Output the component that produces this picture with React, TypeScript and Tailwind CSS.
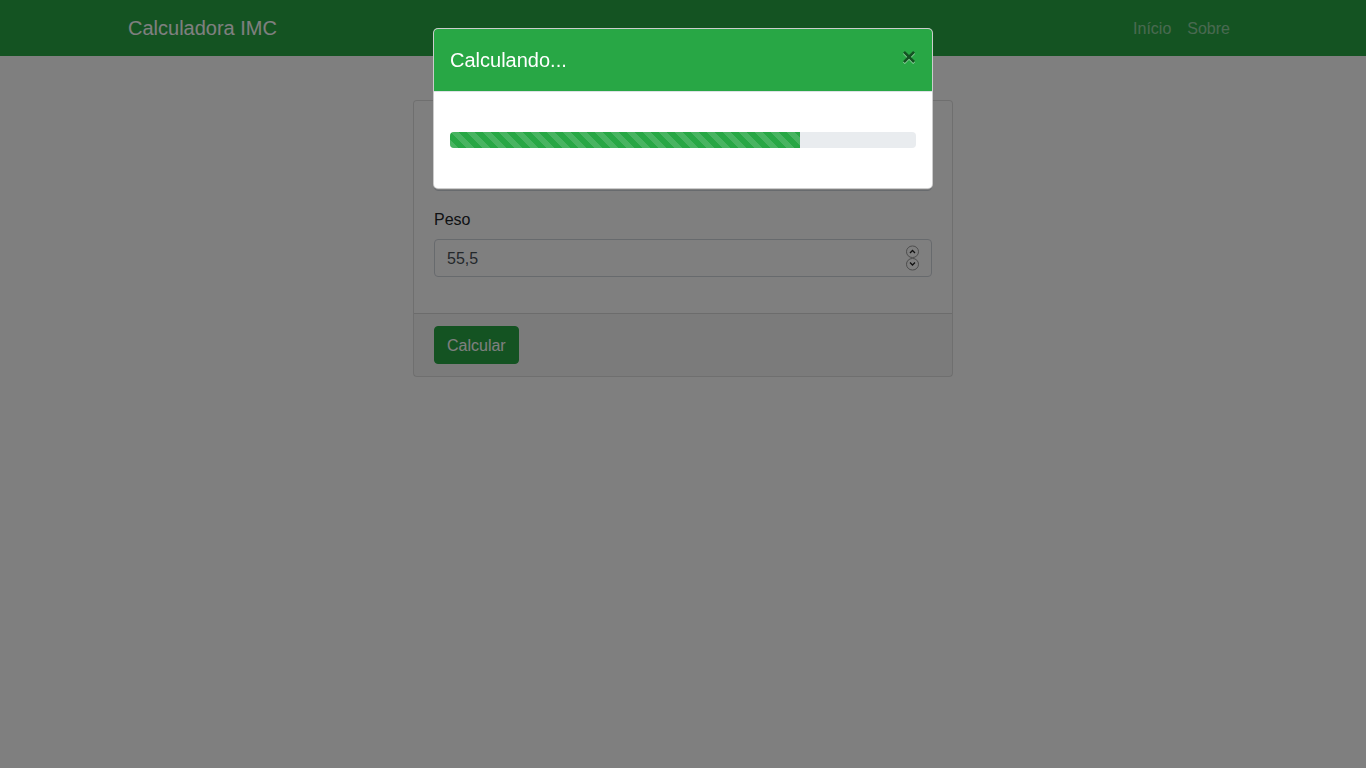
import React from "react";

function Spinner() {
  return (
    <svg width="15" height="26" viewBox="0 0 15 26" className="absolute right-[12px] top-[6px]">
      <rect x="1.5" y="1" width="12" height="11.5" rx="5.75" fill="none" stroke="#9a9a9a" strokeWidth="1" />
      <rect x="1.5" y="13.5" width="12" height="11.5" rx="5.75" fill="none" stroke="#9a9a9a" strokeWidth="1" />
      <path d="M5 8 L7.5 5.5 L10 8" fill="none" stroke="#222" strokeWidth="1.3" />
      <path d="M5 17.5 L7.5 20 L10 17.5" fill="none" stroke="#222" strokeWidth="1.3" />
    </svg>
  );
}

function Field({ label, value, spinner }: { label: string; value: string; spinner?: boolean }) {
  return (
    <div className="mb-4">
      <label className="block mb-2 pt-px h-6 text-[16px] leading-6 text-[#212529]">{label}</label>
      <div className="relative">
        <input
          type="text"
          readOnly
          value={value}
          className="block w-full h-[38px] px-3 pt-[8px] pb-[6px] text-[16px] text-[#495057] bg-white border border-[#ced4da] rounded outline-none"
        />
        {spinner && <Spinner />}
      </div>
    </div>
  );
}

export default function App() {
  return (
    <div className="min-h-screen bg-white font-['Liberation_Sans',Arial,sans-serif]">
      <nav className="bg-[#28a745] h-14">
        <div className="mx-auto w-[1140px] px-[15px] h-full flex items-center justify-between">
          <span className="text-[20px] text-white leading-[30px]">Calculadora IMC</span>
          <div className="flex pt-[2px] text-[16px] text-white/50">
            <span className="px-2">Início</span>
            <span className="px-2">Sobre</span>
          </div>
        </div>
      </nav>

      <div className="mx-auto w-[1140px] px-[15px] mt-11">
        <div className="ml-[285px] w-[540px] border border-black/[0.125] rounded bg-white">
          <div className="p-5">
            <Field label="Altura" value="1,70" />
            <Field label="Peso" value="55,5" spinner />
          </div>
          <div className="border-t border-black/[0.125] bg-black/[0.03] px-5 py-3">
            <button className="h-[38px] px-3 pt-[7px] pb-[5px] leading-6 rounded border border-[#28a745] bg-[#28a745] text-white text-[16px]">
              Calcular
            </button>
          </div>
        </div>
      </div>

      {/* backdrop */}
      <div className="fixed inset-0 bg-black/50" />

      {/* modal */}
      <div className="fixed inset-0 flex justify-center">
        <div className="mt-7 w-[500px] h-fit bg-white border border-black/20 rounded-[5px] overflow-hidden">
          <div className="bg-[#28a745] flex items-start justify-between p-4 border-b border-[#dee2e6]">
            <h5 className="text-[20px] leading-[30px] text-white">Calculando...</h5>
            <span className="text-[24px] font-bold leading-none text-black opacity-50 [text-shadow:0_1px_0_#fff]">
              ×
            </span>
          </div>
          <div className="p-4">
            <div className="my-6 h-4 bg-[#e9ecef] rounded overflow-hidden">
              <div className="h-full w-3/4 bg-[#28a745] bg-[length:16px_16px] bg-[linear-gradient(45deg,rgba(255,255,255,.15)_25%,transparent_25%,transparent_50%,rgba(255,255,255,.15)_50%,rgba(255,255,255,.15)_75%,transparent_75%,transparent)]" />
            </div>
          </div>
        </div>
      </div>
    </div>
  );
}
